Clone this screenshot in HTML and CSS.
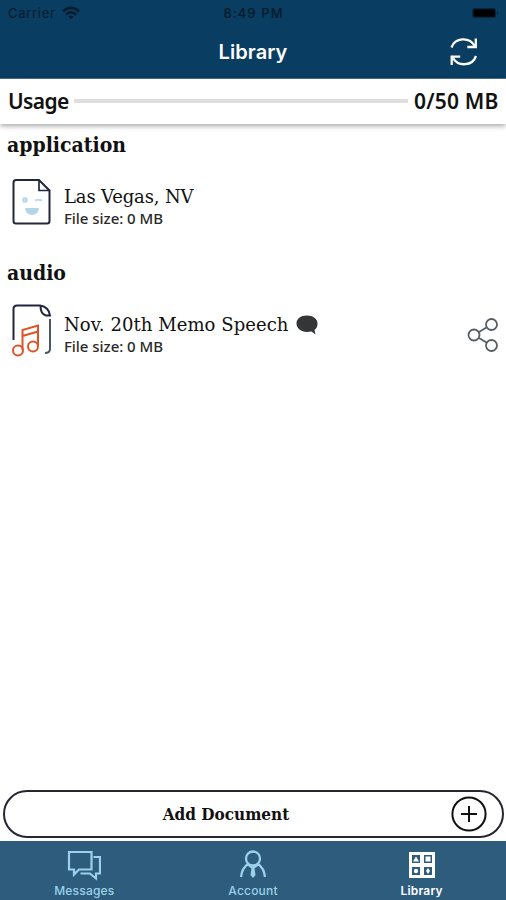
FILE: index.html
```html
<!DOCTYPE html>
<html lang="en">
<head>
<meta charset="utf-8">
<meta name="viewport" content="width=device-width">
<title>Library</title>
<link rel="stylesheet" href="styles.css">
</head>
<body>
<div class="app">
  <header class="top">
    <div class="status">
      <div class="carrier"><span class="carrier-name">Carrier</span>
        <svg class="wifi" width="18" height="14" viewBox="0 0 18 14" fill="none" stroke="#051a2a" stroke-width="2.5"><path d="M1 5.4Q9-1.9 17 5.4M4 8.5Q9 4.1 14 8.5"/><path d="M6.4 10.4Q9 8.6 11.6 10.4L9 13Z" fill="#051a2a" stroke="none"/></svg>
      </div>
      <span class="time">8:49 PM</span>
      <svg class="battery" width="28" height="12" viewBox="0 0 28 12"><rect x="1" y="1" width="24" height="10" rx="2.5" fill="#06283f"/><rect x="2.5" y="2.2" width="21.500" height="7.600" rx="1.500" fill="#000"/><path d="M26 4v4q2-2 0-4" fill="#06283f"/></svg>
    </div>
    <div class="titlebar">
      <h1 class="title">Library</h1>
      <svg class="refresh" width="28" height="30" viewBox="0 0 28 30" fill="none" stroke="#fff" stroke-width="2.300"><path d="M1.500 10.500C5 .8 19 -.8 25 9.300M25.800 1.500v8.500h-8.500M26 19C22.500 29 8.500 30.500 2.500 20.300M1.700 28v-8.300h8.500"/></svg>
    </div>
  </header>
  <section class="usage">
    <span class="usage-label">Usage</span>
    <div class="meter"></div>
    <span class="usage-value">0/50 MB</span>
  </section>
  <main class="files">
    <section class="group">
      <h2 class="group-title">application</h2>
      <div class="file">
        <svg class="file-icon" width="44" height="56" viewBox="0 0 44 56" fill="none"><path d="M5 5H28L38.500 15.500V46Q38.500 48.500 36 48.500H5Q2.500 48.500 2.500 46V8Q2.500 5 5 5Z" stroke="#20283a" stroke-width="2"/><path d="M28 5V15.500H38.500" stroke="#20283a" stroke-width="1.700"/><circle cx="14" cy="25" r="3" fill="#bfdcec"/><path d="M24 25.500q3.500-1.500 7 0" stroke="#bfdcec" stroke-width="2"/><path d="M14 33H28Q27 40 21 40T14 33Z" fill="#b3d5e8"/></svg>
        <div class="file-text"><div class="file-name"><span class="place">Las Vegas, NV</span></div><div class="file-size">File size: 0 MB</div></div>
      </div>
    </section>
    <section class="group">
      <h2 class="group-title">audio</h2>
      <div class="file">
        <svg class="file-icon" width="44" height="56" viewBox="0 0 44 56" fill="none"><path d="M2.500 37V6Q2.500 2.500 6 2.500H29Q38 4 39 12.500H35Q29.500 11 29.500 3" stroke="#20243e" stroke-width="2"/><path d="M39 16V46Q39 50 34 50" stroke="#4b5568" stroke-width="2"/><g stroke="#df5427" stroke-width="2"><path d="M11.500 47V27L27 22.500V43M11.500 33L27 28.500"/><circle cx="7" cy="47.500" r="5"/><circle cx="22" cy="43.500" r="5"/></g></svg>
        <div class="file-text"><div class="file-name"><span class="memo">Nov. 20th Memo Speech</span><svg class="bubble" width="22" height="20" viewBox="0 0 22 20"><path d="M11 .5C4.500.5.5 4 .5 8.500S5 17 11 17L15.500 16.500L19.500 19.500L18.500 15Q21.500 12.500 21.500 8.500C21.500 4 17 .5 11 .5Z" fill="#343537"/></svg></div><div class="file-size">File size: 0 MB</div></div>
        <svg class="share" width="32" height="36" viewBox="0 0 32 36" fill="none" stroke="#555e66" stroke-width="1.800"><circle cx="7" cy="18" r="5.500"/><circle cx="24.500" cy="7.500" r="5.500"/><circle cx="24.500" cy="28.500" r="5.500"/><path d="M12 15L19.500 10.500M12 21L19.500 25.500"/></svg>
      </div>
    </section>
  </main>
  <button class="add"><span class="add-label">Add Document</span>
    <svg class="plus" width="36" height="36" viewBox="0 0 36 36" fill="none" stroke="#111" stroke-width="2"><circle cx="18" cy="18" r="16.600"/><path d="M18 10V26M10 18H26"/></svg>
  </button>
  <nav class="tabs">
    <a class="tab"><svg width="34" height="32" viewBox="0 0 34 32" fill="none" stroke="#9bd2ea" stroke-width="2.200"><path d="M2 3H24.500V20.500H12L7 25.500V20.500H2ZM26.500 8H33V24.500H29V29.500L23 24.500H13.500"/></svg><span>Messages</span></a>
    <a class="tab"><svg width="34" height="32" viewBox="0 0 34 32" fill="none" stroke="#9bd2ea" stroke-width="2.300"><circle cx="17" cy="9.500" r="7"/><path d="M12 15Q6 19 5 28M22 15Q28 19 29 28M12 15.500L17 19L22 15.500"/><path d="M15.500 19h3l1 7-2.500 3-2.500-3z" fill="#9bd2ea" stroke="none"/></svg><span>Account</span></a>
    <a class="tab active"><svg width="34" height="32" viewBox="0 0 34 32"><rect x="4" y="3" width="26" height="26" fill="#fff"/><path d="M7 6h8v8H7zM19 6h8v8h-8zM7 18h8v8H7zM19 18h8v8h-8z" fill="#2d5c7d"/><path d="M11 7.500L14 12.500H8ZM20.500 7.500h5v5h-5z" fill="#fff"/><circle cx="11" cy="22" r="2.200" fill="#fff"/><path d="M23 19l2 3-2 3-2-3z" fill="#fff"/></svg><span>Library</span></a>
  </nav>
</div>
</body>
</html>
```
FILE: styles.css
```css
* { box-sizing: border-box; }
body { margin: 0; background: #fff; color: #111; font-family: "Noto Sans", sans-serif; }
.app { width: 506px; height: 900px; display: flex; flex-direction: column; overflow: hidden; }
.app span { white-space: nowrap; }
.top { height: 79px; background: #093d61; border-bottom: 1px solid #526f8e; flex: none; }
.status { height: 26px; display: grid; grid-template-columns: 1fr auto 1fr; align-items: center; padding: 0 7px 0 8px; font: 13px/26px Inter, sans-serif; color: #051a2a; }
.carrier { display: flex; align-items: center; gap: 6px; }
.carrier-name { letter-spacing: .7px; }
.time { font-weight: 500; letter-spacing: 1.1px; }
.battery { justify-self: end; }
.titlebar { height: 52px; display: grid; grid-template-columns: 1fr auto 1fr; align-items: center; padding-right: 28px; padding-left: 28px; }
.title { grid-column: 2; margin: 0; color: #fff; font: 600 20px/52px Inter, sans-serif; letter-spacing: .1px; }
.refresh { justify-self: end; }
.usage { height: 45px; flex: none; display: flex; align-items: center; padding: 0 8px; background: #fff; box-shadow: 0 2px 5px rgba(0,0,0,.35); font: 600 21px/42px "Noto Sans", sans-serif; position: relative; }
.usage-label { width: 67px; height: 44px; letter-spacing: -.6px; }
.usage-value { width: 84px; height: 44px; letter-spacing: .2px; }
.meter { flex: 1; height: 4px; background: #dedede; margin: 0 6px 2px -1px; }
.files { flex: 1; padding: 5px 7px; }
.group { height: 127.500px; }
.group-title { margin: 0; height: 32px; font: 700 21px/32px "DejaVu Serif", serif; font-stretch: condensed; }
.file { display: flex; align-items: center; height: 62px; margin-top: 11px; padding-left: 4px; }
.file-icon { flex: none; }
.file-text { flex: 1; padding: 7px 0 0 9px; }
.file-name { height: 24px; display: flex; align-items: center; gap: 7px; font: 18px/24px "DejaVu Serif", serif; }
.place { letter-spacing: -.15px; }
.memo { letter-spacing: .07px; }
.file-size { font: 500 15px/19px "Noto Sans", sans-serif; letter-spacing: -.05px; color: #292929; }
.share { position: relative; top: 4px; }
.add { appearance: none; display: grid; grid-template-columns: 1fr auto 1fr; align-items: center; height: 48px; flex: none; margin: 0 2px 3px 3px; padding: 0 15px 0 13px; border: 2px solid #262532; border-radius: 24px; background: #fff; color: #111; font: 700 17px/40px "DejaVu Serif", serif; font-stretch: condensed; }
.add-label { grid-column: 2; margin-right: 53px; }
.plus { justify-self: end; }
.tabs { height: 59px; flex: none; display: grid; grid-template-columns: repeat(3, 1fr); background: #2d5c7d; }
.tab { display: flex; flex-direction: column; align-items: center; padding-top: 8px; color: #9bd2ea; font: 500 12px/20px Inter, sans-serif; letter-spacing: .2px; }
.active { color: #fff; font-weight: 600; }
```
